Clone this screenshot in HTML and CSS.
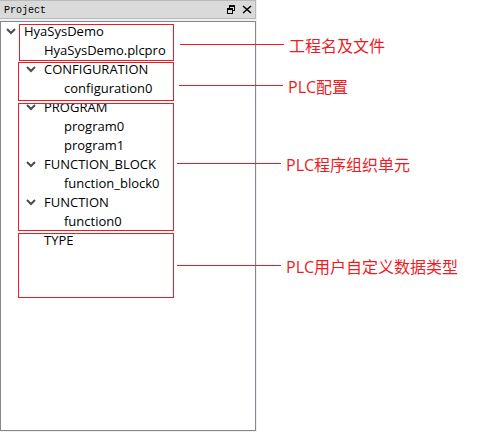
FILE: index.html
```html
<!DOCTYPE html>
<html lang="zh-CN">
<head>
<meta charset="utf-8">
<title>Project</title>
<link rel="stylesheet" href="styles.css">
</head>
<body>
<main class="stage">
  <section class="dock">
    <header class="titlebar">
      <h1 class="title">Project</h1>
      <button class="tool" type="button" aria-label="Float">
        <svg width="10" height="10" viewBox="0 0 10 10" shape-rendering="crispEdges"><path d="M3 0h6v6H7V5h1V2H4v1H3zM1 3h6v6H1zM2 5v3h4V5z" fill="#000" fill-rule="evenodd"/></svg>
      </button>
      <button class="tool" type="button" aria-label="Close">
        <svg width="10" height="10" viewBox="0 0 10 10"><path d="M1 1l8 7M9 1l-8 7" stroke="#000" stroke-width="1.6"/></svg>
      </button>
    </header>
    <div class="panel">
      <ul class="tree">
        <li>
          <div class="row"><button class="toggle" type="button" aria-label="Collapse"><svg width="10" height="7" viewBox="0 0 10 7"><path d="M1 1l4 4 4-4" /></svg></button><span>HyaSysDemo</span></div>
          <ul>
            <li><div class="row leaf">HyaSysDemo.plcpro</div></li>
            <li>
              <div class="row"><button class="toggle" type="button" aria-label="Collapse"><svg width="10" height="7" viewBox="0 0 10 7"><path d="M1 1l4 4 4-4" /></svg></button><span>CONFIGURATION</span></div>
              <ul><li><div class="row leaf">configuration0</div></li></ul>
            </li>
            <li>
              <div class="row clipped"><button class="toggle" type="button" aria-label="Collapse"><svg width="10" height="7" viewBox="0 0 10 7"><path d="M1 1l4 4 4-4" /></svg></button><span>PROGRAM</span></div>
              <ul>
                <li><div class="row leaf">program0</div></li>
                <li><div class="row leaf">program1</div></li>
              </ul>
            </li>
            <li>
              <div class="row"><button class="toggle" type="button" aria-label="Collapse"><svg width="10" height="7" viewBox="0 0 10 7"><path d="M1 1l4 4 4-4" /></svg></button><span>FUNCTION_BLOCK</span></div>
              <ul><li><div class="row leaf">function_block0</div></li></ul>
            </li>
            <li>
              <div class="row"><button class="toggle" type="button" aria-label="Collapse"><svg width="10" height="7" viewBox="0 0 10 7"><path d="M1 1l4 4 4-4" /></svg></button><span>FUNCTION</span></div>
              <ul><li><div class="row leaf">function0</div></li></ul>
            </li>
            <li><div class="row leaf">TYPE</div></li>
          </ul>
        </li>
      </ul>
    </div>
  </section>

  <div class="frame frame-project"></div>
  <div class="frame frame-config"></div>
  <div class="frame frame-program"></div>
  <div class="frame frame-type"></div>

  <div class="callout callout-project"><i class="line"></i><span>工程名及文件</span></div>
  <div class="callout callout-config"><i class="line"></i><span>PLC配置</span></div>
  <div class="callout callout-program"><i class="line"></i><span>PLC程序组织单元</span></div>
  <div class="callout callout-type"><i class="line"></i><span>PLC用户自定义数据类型</span></div>
</main>
</body>
</html>
```
FILE: styles.css
```css
* { box-sizing: border-box; }

body {
  margin: 0;
  background: #fff;
  color: #000;
  font: 13px/19px "Open Sans", "Noto Sans CJK SC", sans-serif;
}

.stage {
  position: relative;
  min-height: 100vh;
  padding-bottom: 5px;
  display: flex;
}

.dock {
  width: 51.2%;
  max-width: 257px;
  display: flex;
  flex-direction: column;
  gap: 2px;
  padding: 0 1px 1px 0;
  background: #f0f0f0;
}

.titlebar {
  display: flex;
  align-items: center;
  gap: 6px;
  height: 19px;
  padding: 0 3px 0 4px;
  background: #dadada;
  border: 1px solid #b9b9b9;
  border-left: 0;
}

.title {
  flex: 1;
  margin: 0;
  padding-top: 2px;
  font: 10px/16px "Liberation Mono", monospace;
}

.tool,
.toggle {
  padding: 0;
  border: 0;
  background: none;
}

.tool { width: 10px; height: 10px; }
.tool svg,
.toggle svg { display: block; }

.panel {
  flex: 1;
  background: #fff;
  border: 1px solid #828790;
}

.tree,
.tree ul {
  list-style: none;
  margin: 0;
  padding: 0;
}

.tree ul { padding-left: 20px; }

.row {
  display: flex;
  align-items: center;
  height: 19px;
  padding-left: 5px;
  white-space: nowrap;
}

.leaf { padding-left: 23px; }
.clipped { clip-path: inset(5px 0 0 0); }

.toggle { width: 18px; }

.toggle path {
  fill: none;
  stroke: #4c4c4c;
  stroke-width: 2;
}

.frame {
  position: absolute;
  left: 18px;
  width: 156px;
  border: 1px solid #ed1c24;
}

.frame-project { left: 19px; top: 24px; width: 155px; height: 37px; }
.frame-config { top: 62px; height: 39px; }
.frame-program { top: 103px; height: 128px; }
.frame-type { top: 233px; height: 65px; }

.callout {
  position: absolute;
  left: 177px;
  display: flex;
  gap: 5px;
  color: #ed1c24;
  font-size: 16px;
  line-height: 24px;
  white-space: nowrap;
}

.line {
  width: 104px;
  height: 1px;
  margin-top: 10px;
  background: #ed1c24;
}

.callout-project { left: 180px; top: 34px; }
.callout-config { left: 179px; top: 75px; }
.callout-program { top: 153px; }
.callout-type { top: 255px; }
```
